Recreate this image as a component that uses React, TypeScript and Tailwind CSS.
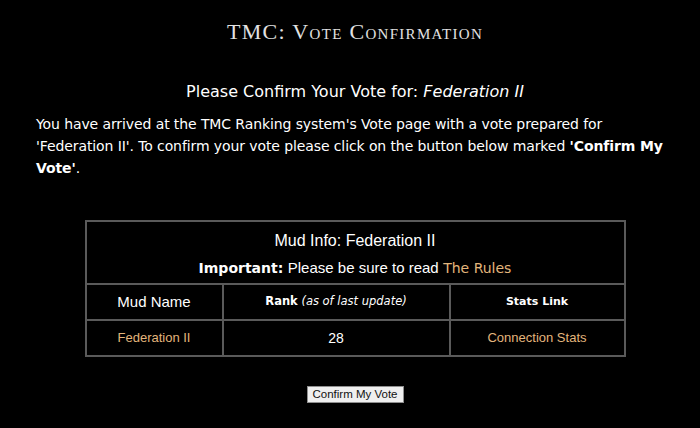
import React from "react";

const link = "text-[#e3b57c]";
const sans = { fontFamily: '"Liberation Sans", sans-serif' };

export default function App() {
  return (
    <div className="w-[700px] h-[428px] bg-black text-white overflow-hidden pl-[10px]" style={{ fontFamily: '"DejaVu Sans", sans-serif' }}>
      <div className="flex flex-col items-center pt-[18px]">
        <h1
          className="text-[22px] leading-[28px] text-[#e2e2e2] tracking-[1.3px]"
          style={{ fontFamily: '"Liberation Serif", serif', fontVariant: "small-caps" }}
        >
          TMC: Vote Confirmation
        </h1>
      </div>
      <div className="mt-[36px] text-center text-[16px] leading-[20px]">
        Please Confirm Your Vote for: <i>Federation II</i>
      </div>
      <p className="mt-[11px] pl-[26px] pr-[28px] text-[14px] leading-[22px] tracking-[-0.1px]">
        You have arrived at the TMC Ranking system's Vote page with a vote prepared for 'Federation II'. To confirm your vote
        please click on the button below marked <b>'Confirm My Vote'</b>.
      </p>
      <div className="flex justify-center mt-[41px]">
        <table className="w-[541px] border-collapse border-2 border-[#5a5a5a]">
          <tbody>
            <tr>
              <td colSpan={3} className="border-2 border-[#5a5a5a] text-center align-top h-[63px] pt-[5px]">
                <div className="text-[16px] leading-[27px]" style={sans}>
                  Mud Info: Federation II
                </div>
                <div className="text-[14px] leading-[27px]">
                  <b>Important:</b>{" "}
                  <span className="text-[15px]" style={sans}>Please be sure to read</span>{" "}
                  <span className={link}>The Rules</span>
                </div>
              </td>
            </tr>
            <tr className="h-[36px]">
              <td className="border-2 border-[#5a5a5a] text-center w-[137px] text-[15px]" style={sans}>
                Mud Name
              </td>
              <td className="border-2 border-[#5a5a5a] text-center w-[227px] text-[11.5px]">
                <b>Rank</b> <i>(as of last update)</i>
              </td>
              <td className="border-2 border-[#5a5a5a] text-center text-[11px]">
                <b>Stats Link</b>
              </td>
            </tr>
            <tr className="h-[36px]" style={sans}>
              <td className={`border-2 border-[#5a5a5a] text-center text-[13px] ${link}`}>Federation II</td>
              <td className="border-2 border-[#5a5a5a] text-center text-[14px]">28</td>
              <td className={`border-2 border-[#5a5a5a] text-center text-[13px] ${link}`}>Connection Stats</td>
            </tr>
          </tbody>
        </table>
      </div>
      <div className="flex justify-center mt-[29px]">
        <button
          className="h-[17px] px-[5px] bg-[#efefef] border border-[#8f8f8f] text-[11.5px] leading-[15px] text-[#111]"
          style={sans}
        >
          Confirm My Vote
        </button>
      </div>
    </div>
  );
}
